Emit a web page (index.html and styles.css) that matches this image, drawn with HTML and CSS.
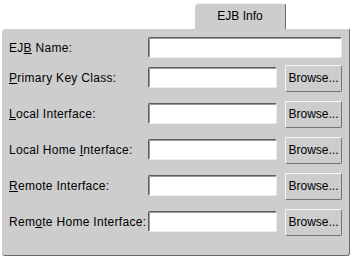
FILE: index.html
```html
<!DOCTYPE html>
<html>
<head>
<meta charset="utf-8">
<link rel="stylesheet" href="styles.css">
</head>
<body>
<div class="tabs"><div class="tab">EJB Info</div></div>
<div class="panel">
  <div class="row first"><span class="label">EJ<u>B</u> Name:</span><span class="field wide"></span></div>
  <div class="row"><span class="label"><u>P</u>rimary Key Class:</span><span class="field"></span><span class="btn">Browse...</span></div>
  <div class="row"><span class="label"><u>L</u>ocal Interface:</span><span class="field"></span><span class="btn">Browse...</span></div>
  <div class="row"><span class="label">Local Home <u>I</u>nterface:</span><span class="field"></span><span class="btn">Browse...</span></div>
  <div class="row"><span class="label"><u>R</u>emote Interface:</span><span class="field"></span><span class="btn">Browse...</span></div>
  <div class="row"><span class="label">Rem<u>o</u>te Home Interface:</span><span class="field"></span><span class="btn">Browse...</span></div>
</div>
</body>
</html>
```
FILE: styles.css
```css
html, body {
  margin: 0;
  padding: 0;
  background: #ffffff;
  font-family: "Liberation Sans", Arial, sans-serif;
  font-size: 12px;
  color: #000;
}
.tabs {
  display: flex;
  padding-left: 195px;
  padding-top: 3px;
}
.tab {
  width: 91px;
  height: 26px;
  box-sizing: border-box;
  background: #cdcdcd;
  border-right: 1px solid #6a6a6a;
  border-top: 1px solid #f4f4f4;
  border-radius: 4px 3px 0 0;
  text-align: center;
  line-height: 25px;
}
.panel {
  margin-left: 2px;
  width: 348px;
  height: 227px;
  box-sizing: border-box;
  background: #cdcdcd;
  border-right: 1px solid #6a6a6a;
  border-bottom: 1px solid #6a6a6a;
  border-radius: 4px 0 3px 3px;
  padding: 8px 0 0 7px;
}
.row {
  display: grid;
  grid-template-columns: 131px 129px 57px;
  column-gap: 8px;
  align-items: start;
  height: 27px;
  margin-bottom: 9px;
}
.row.first {
  height: 21px;
  margin-bottom: 7px;
}
.label {
  height: 21px;
  line-height: 22px;
  margin-top: 2px;
  white-space: nowrap;
  letter-spacing: 0.3px;
}
.first .label, .first .field {
  margin-top: 0;
}
.field {
  display: block;
  height: 21px;
  box-sizing: border-box;
  margin-top: 2px;
  background: #ffffff;
  border-style: solid;
  border-width: 1px;
  border-color: #5e5e5e #ececec #ececec #5e5e5e;
  box-shadow: inset 1px 1px 0 #9a9a9a;
  border-radius: 2px;
}
.field.wide {
  grid-column: 2 / 4;
}
.btn {
  display: block;
  height: 27px;
  box-sizing: border-box;
  border-style: solid;
  border-width: 1px;
  border-color: #f6f6f6 #747474 #747474 #f6f6f6;
  border-radius: 2px;
  background: #cdcdcd;
  text-align: center;
  line-height: 25px;
}
u {
  text-decoration: underline;
  text-underline-offset: 1px;
}
```
